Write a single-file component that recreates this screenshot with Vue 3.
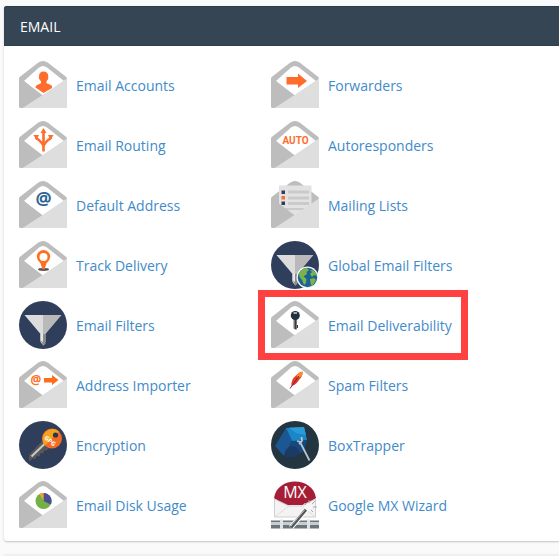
<script setup>
const items = [
  { id: 'accounts', label: 'Email Accounts' },
  { id: 'forwarders', label: 'Forwarders' },
  { id: 'routing', label: 'Email Routing' },
  { id: 'autoresponders', label: 'Autoresponders' },
  { id: 'default', label: 'Default Address' },
  { id: 'lists', label: 'Mailing Lists' },
  { id: 'track', label: 'Track Delivery' },
  { id: 'global', label: 'Global Email Filters' },
  { id: 'filters', label: 'Email Filters' },
  { id: 'deliverability', label: 'Email Deliverability', marked: true },
  { id: 'importer', label: 'Address Importer' },
  { id: 'spam', label: 'Spam Filters' },
  { id: 'encryption', label: 'Encryption' },
  { id: 'boxtrapper', label: 'BoxTrapper' },
  { id: 'disk', label: 'Email Disk Usage' },
  { id: 'mx', label: 'Google MX Wizard' },
]
const round = ['global', 'filters', 'encryption', 'boxtrapper', 'mx']
const isEnvelope = (id) => !round.includes(id)
</script>

<template>
  <main class="page">
    <section class="panel">
      <h2 class="panel-title">EMAIL</h2>
      <ul class="grid">
        <li v-for="item in items" :key="item.id">
          <a href="#" class="item" :class="{ marked: item.marked }">
            <svg class="icon" viewBox="0 0 48 48" aria-hidden="true">
              <!-- Envelope back and letter -->
              <template v-if="isEnvelope(item.id)">
                <path fill="#bdbdbd" d="M0 18Q0 16.500 1 15.700L19 1.800Q24-1.600 29 1.800L47 15.700Q48 16.500 48 18V45Q48 47 46 47H2Q0 47 0 45Z" />
                <template v-if="item.id === 'lists'">
                  <path fill="#e2e2e2" d="M8 4.500H40.500V27L24 36L8 27Z" />
                  <path fill="#cacaca" d="M17 9.500H38V12.500H17ZM17 15.500H38V18.500H17ZM17 21H38V24H17ZM12 27H37L35 29H14Z" />
                  <path fill="#2c3e5c" d="M10.500 9.500H14V13H10.500ZM10.500 20.500H14V24H10.500Z" />
                  <path fill="#ff6c2c" d="M10.500 15H14V18.500H10.500Z" />
                </template>
                <path v-else fill="#fff" d="M5 20L20 6.600Q24 3.400 28 6.600L45 20L24 35Z" />
                <path fill="#bdbdbd" d="M0 16.500L24.500 35L4 47H2Q0 47 0 45Z" />
                <path fill="#dedede" d="M48 17.500V45Q48 47 46 47H3.500L24 33.800Z" />
              </template>

              <!-- Person -->
              <path v-if="item.id === 'accounts'" fill="#ff6c2c" d="M24.500 10.500Q28.800 10.500 29.300 15Q30 18 27.500 20.200V22.300L32 24Q33.500 25 33 27L24.500 32L16.500 26.500Q16.500 24.600 18 24L22 22.300V20.200Q19.300 18 20 15Q20.300 10.500 24.500 10.500Z" />

              <path v-if="item.id === 'forwarders'" fill="#ff6c2c" d="M15.500 16H27V12.500L36 20L27 27V23.500H15.500Z" />

              <!-- Branching arrows -->
              <g v-if="item.id === 'routing'" fill="none" stroke="#ff6c2c" stroke-width="2.600">
                <path d="M24.500 30.500V10M24.500 25Q23 21 16.500 16.500M24.500 25Q26 21 32.500 16.500" />
                <path fill="#ff6c2c" stroke="none" d="M24.500 7L27.500 12H21.500ZM14.500 14L20 14L17.500 19ZM34.500 14L29 14L31.500 19Z" />
              </g>

              <text v-if="item.id === 'autoresponders'" x="24.500" y="23" class="glyph auto">AUTO</text>

              <text v-if="item.id === 'default'" x="24.500" y="24" class="glyph at">@</text>

              <!-- Map pin -->
              <g v-if="item.id === 'track'">
                <ellipse cx="24.500" cy="28.500" rx="5.500" ry="1.400" fill="#555" />
                <path fill="#ff6f1f" fill-rule="evenodd" d="M24.500 9A6.700 6.700 0 0 1 31.200 15.700Q31.200 19 27.500 22.300L25.500 28.500H23.500L21.500 22.300Q17.800 19 17.800 15.700A6.700 6.700 0 0 1 24.500 9ZM24.500 12A4 4 0 1 0 24.500 20A4 4 0 1 0 24.500 12Z" />
              </g>

              <!-- Key -->
              <g v-if="item.id === 'deliverability'">
                <path fill="#777" d="M22.500 17H26V28.500H24L22.500 27.500Z" />
                <path fill="#343c42" d="M24 17H25V28H24ZM26 24H27V27H26Z" />
                <circle cx="24.300" cy="14.500" r="4.500" fill="#22313f" />
                <path d="M22.500 12H26" stroke="#d9dde0" stroke-width="1.400" />
              </g>

              <g v-if="item.id === 'importer'">
                <text x="17" y="22.500" class="glyph at-small">@</text>
                <path fill="#ff6c1a" d="M25 17H33V14L39.500 19L33 24V21.500H25Z" />
              </g>

              <!-- Feather -->
              <g v-if="item.id === 'spam'">
                <path fill="#e43b22" d="M20.500 25Q19.500 19 25 14.500Q28 11 31.500 10.500Q32 15 28 19Q25 24 20.500 25Z" />
                <path fill="#ff8a2a" d="M25.500 14Q28 11 31.500 10.500Q31.800 13 30.500 15.500L27 17Z" />
                <path fill="none" stroke="#7c2445" stroke-width="1" d="M19 27.500L28 15" />
              </g>

              <!-- Pie chart -->
              <g v-if="item.id === 'disk'">
                <circle cx="24.500" cy="20" r="8" fill="#74b043" />
                <path fill="#4b4e96" d="M24.500 20V12A8 8 0 0 1 31.800 23.500Z" />
                <path fill="#f5a12c" d="M24.500 20V12A8 8 0 0 0 20.500 13Z" />
              </g>

              <!-- Funnel -->
              <g v-if="item.id === 'filters' || item.id === 'global'">
                <circle cx="24" cy="24" r="24" fill="#2f3e5b" />
                <path fill="#dcdcdc" d="M5.500 14H24V44L21.500 41V33Z" />
                <path fill="#b9b9b9" d="M24 14H42.500L26.500 33V41L24 44Z" />
                <path fill="#8c8c8c" d="M21.500 33H26.500V43L24 45L23 41.500L21.500 40Z" />
                <path fill="#e6e6e6" d="M21.500 33H24V41L21.500 39.500Z" />
              </g>
              <g v-if="item.id === 'global'">
                <circle cx="36.500" cy="36.500" r="11" fill="#f4f7f5" />
                <circle cx="36.500" cy="36.500" r="9.700" fill="#1c6196" />
                <path fill="#79b44b" d="M28 32Q31 27.500 36 27L38 29L35.500 31L36 33L32.500 35.500L35.500 38L35 42L33 44L31 39L28.500 36ZM39 29L42 29.200Q45 31.500 46 35L43 34L41 36L39 33L41 31ZM39 38L43 37L45 39Q43 43 40.500 45L39.500 42Z" />
              </g>

              <!-- Key with round tag -->
              <g v-if="item.id === 'encryption'">
                <circle cx="24" cy="24" r="24" fill="#2f3e5b" />
                <path fill="#575759" d="M24 19L31 26L27 30L25.500 29L24 32.500L21.500 32L20.500 35.500L17.500 35L16.500 38L13.500 37.500L12 39.500H10V34Z" />
                <path stroke="#c9c9c9" stroke-width="2" d="M12.500 35.500L26 22.500" />
                <circle cx="33" cy="17.500" r="10" fill="#f26a24" />
                <path fill="#f6a21c" d="M26 24.600A10 10 0 0 1 40 10.400Z" />
                <circle cx="36.500" cy="14" r="2.600" fill="#283652" />
                <text x="31" y="22" class="glyph gpg" transform="rotate(40 31 20)">GPG</text>
              </g>

              <!-- Box and wand -->
              <g v-if="item.id === 'boxtrapper'">
                <circle cx="24" cy="24" r="24" fill="#233540" />
                <path fill="#1b5893" d="M15 7L21 20L13 35L4 25Z" />
                <path fill="#15497f" d="M21 20L36 19L33 30L29 32L22 36L13 35Z" />
                <path fill="#1c3a66" d="M13 35Q14 27 20 25Q26 24 29 32L22 36Z" />
                <path fill="#1a86c8" d="M15 7L33 6L36 19L21 20Z" />
                <path fill="#2b9bd8" d="M18 6.800L33 6L35 14L25 12Z" />
                <path fill="none" stroke="#b8c4ca" stroke-width="1.800" d="M29 21L38.500 39.500M28 23L31 20L30.500 16M30 21L26 20" />
              </g>

              <!-- MX letter on a network line, with wand -->
              <g v-if="item.id === 'mx'">
                <path fill="#a51e36" d="M3 17C6-5 42-5 45 17L36 24H12Z" />
                <text x="24" y="17" class="glyph mx">MX</text>
                <path fill="#f3f3f3" stroke="#d0d0d0" d="M3.500 18L18 25H30L44.500 18V36H3.500Z" />
                <path fill="none" stroke="#dedede" d="M3.500 36L18 25M44.500 36L30 25" />
                <path fill="#6b757d" d="M0 39.500H48V47.500H0Z" />
                <path fill="#c9cdd0" d="M0 41H48V44H0Z" />
                <path fill="#e0e2e3" d="M9 38.500H12V48H9ZM36 38.500H39V48H36Z" />
                <path stroke="#fff" stroke-width="5" d="M20 46.500L39 24" />
                <path stroke="#555" stroke-width="3" d="M20 46.500L35 28.500" />
                <path stroke="#bbb" stroke-width="1" d="M20 45L34 28.500" />
                <path stroke="#f6f6f6" stroke-width="3" d="M35 28.500L38.500 24.500" />
                <path stroke="#aaa" stroke-width="1" d="M38 22V19M41 23L44 20M42 26H46M40 29L42 31M35 24L33 22" />
              </g>
            </svg>
            <span class="label">{{ item.label }}</span>
          </a>
        </li>
      </ul>
    </section>
    <section class="next-panel" aria-hidden="true"></section>
  </main>
</template>

<style>
body {
  margin: 0;
  background: #fafafa;
}
</style>

<style scoped>
.page {
  padding: 6px 0 0 4px;
  overflow: hidden;
  font-family: "Open Sans", sans-serif;
  font-size: 14px;
  line-height: 20px;
}
.panel {
  background: #fff;
  border-radius: 3px 0 0 3px;
  box-shadow: 0 1px 2px rgba(0, 0, 0, 0.22);
}
.panel-title {
  margin: 0;
  padding: 11px 16px 9px;
  border-radius: 3px 0 0 0;
  background: #354554;
  box-shadow: inset 0 1px 0 #2b3e4c, inset 0 -1px 0 #2b3e4c;
  color: #fff;
  font-size: 14px;
  font-weight: 400;
}
.grid {
  display: grid;
  grid-template-columns: repeat(auto-fill, 252px);
  margin: 0;
  padding: 9px 15px 6px;
  list-style: none;
}
.item {
  display: inline-flex;
  align-items: center;
  gap: 9px;
  height: 60px;
  color: #428bca;
  text-decoration: none;
  white-space: nowrap;
  vertical-align: top;
}
.icon {
  flex: none;
  width: 48px;
  height: 48px;
}
.label {
  padding-top: 2px;
}
.marked {
  position: relative;
}
.marked::after {
  content: "";
  position: absolute;
  inset: -5px -16px -5px -13px;
  border: 7px solid #ff4141;
}
.glyph {
  font-family: "Open Sans", sans-serif;
  font-weight: 700;
  text-anchor: middle;
}
.auto {
  fill: #ff6c2c;
  font-family: Roboto, sans-serif;
  font-size: 10px;
}
.at {
  fill: #2d6493;
  font-size: 18px;
}
.at-small {
  fill: #ff6c1a;
  font-size: 12px;
}
.gpg {
  fill: #fff;
  font-size: 6px;
}
.mx {
  fill: #fff;
  font-size: 16px;
  font-weight: 400;
}
.next-panel {
  height: 2px;
  margin-top: 14px;
  background: #f0f0f0;
  box-shadow: 0 0 2px rgba(0, 0, 0, 0.15);
}
</style>
